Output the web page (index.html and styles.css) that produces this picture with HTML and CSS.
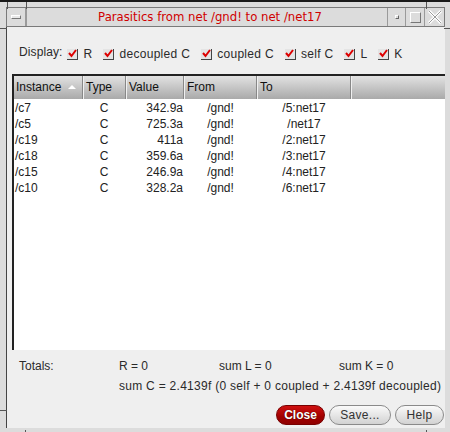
FILE: index.html
```html
<!DOCTYPE html>
<html>
<head>
<meta charset="utf-8">
<link rel="stylesheet" href="styles.css">
</head>
<body>
<div class="frame">
  <div class="titlebar">
    <div class="tb-btn menu-btn"><span class="bar"></span></div>
    <div class="title">Parasitics from net /gnd! to net /net17</div>
    <div class="tb-btn"><span class="dot"></span></div>
    <div class="tb-btn"><span class="sq"></span></div>
    <div class="tb-btn close-x">
      <svg width="14" height="14" viewBox="0 0 14 14"><path d="M1 1 L13 13 M13 1 L1 13" stroke="#fff" stroke-width="3"/><path d="M1 1 L13 13 M13 1 L1 13" stroke="#9a9a9a" stroke-width="1"/></svg>
    </div>
  </div>
  <div class="content">
    <div class="display">
      <span class="dlabel">Display:</span>
      <label class="cb"><span class="box"><svg width="9" height="9" viewBox="0 0 9 9"><path d="M1 4 L3.5 7 L8 1" fill="none" stroke="#d00" stroke-width="2"/></svg></span>R</label>
      <label class="cb"><span class="box"><svg width="9" height="9" viewBox="0 0 9 9"><path d="M1 4 L3.5 7 L8 1" fill="none" stroke="#d00" stroke-width="2"/></svg></span>decoupled C</label>
      <label class="cb"><span class="box"><svg width="9" height="9" viewBox="0 0 9 9"><path d="M1 4 L3.5 7 L8 1" fill="none" stroke="#d00" stroke-width="2"/></svg></span>coupled C</label>
      <label class="cb"><span class="box"><svg width="9" height="9" viewBox="0 0 9 9"><path d="M1 4 L3.5 7 L8 1" fill="none" stroke="#d00" stroke-width="2"/></svg></span>self C</label>
      <label class="cb"><span class="box"><svg width="9" height="9" viewBox="0 0 9 9"><path d="M1 4 L3.5 7 L8 1" fill="none" stroke="#d00" stroke-width="2"/></svg></span>L</label>
      <label class="cb"><span class="box"><svg width="9" height="9" viewBox="0 0 9 9"><path d="M1 4 L3.5 7 L8 1" fill="none" stroke="#d00" stroke-width="2"/></svg></span>K</label>
    </div>
    <div class="table">
      <div class="thead">
        <div class="th c1">Instance <span class="arrow"></span></div>
        <div class="th c2">Type</div>
        <div class="th c3">Value</div>
        <div class="th c4">From</div>
        <div class="th c5">To</div>
        <div class="th c6"></div>
      </div>
      <div class="tbody">
        <div class="tr"><span class="c1">/c7</span><span class="c2">C</span><span class="c3">342.9a</span><span class="c4">/gnd!</span><span class="c5">/5:net17</span></div>
        <div class="tr"><span class="c1">/c5</span><span class="c2">C</span><span class="c3">725.3a</span><span class="c4">/gnd!</span><span class="c5">/net17</span></div>
        <div class="tr"><span class="c1">/c19</span><span class="c2">C</span><span class="c3">411a</span><span class="c4">/gnd!</span><span class="c5">/2:net17</span></div>
        <div class="tr"><span class="c1">/c18</span><span class="c2">C</span><span class="c3">359.6a</span><span class="c4">/gnd!</span><span class="c5">/3:net17</span></div>
        <div class="tr"><span class="c1">/c15</span><span class="c2">C</span><span class="c3">246.9a</span><span class="c4">/gnd!</span><span class="c5">/4:net17</span></div>
        <div class="tr"><span class="c1">/c10</span><span class="c2">C</span><span class="c3">328.2a</span><span class="c4">/gnd!</span><span class="c5">/6:net17</span></div>
      </div>
    </div>
    <div class="totals">
      <div class="trow">
        <span class="tl">Totals:</span><span class="tr1">R = 0</span><span class="tr2">sum L = 0</span><span class="tr3">sum K = 0</span>
      </div>
      <div class="trow2">sum C = 2.4139f (0 self + 0 coupled + 2.4139f decoupled)</div>
    </div>
    <div class="buttons">
      <button class="btn close">Close</button>
      <button class="btn save">Save...</button>
      <button class="btn help">Help</button>
    </div>
  </div>
  <span class="tick t1"></span><span class="tick t2"></span><span class="tick t3"></span><span class="tick t4"></span>
  <span class="tick t5"></span><span class="tick t6"></span><span class="tick t7"></span><span class="tick t8"></span>
</div>
</body>
</html>
```
FILE: styles.css
```css
* { box-sizing: border-box; }
html, body { margin: 0; padding: 0; }
body { width: 450px; height: 432px; overflow: hidden; font-family: "Liberation Sans", Arial, sans-serif; font-size: 12px; color: #2a2a2a; }
.frame {
  position: relative;
  width: 450px; height: 432px;
  background: #dcdcdc;
  border-top: 2px solid #1a1a1a;
  padding: 5px 5px 0 6px;
  display: flex; flex-direction: column;
}
.tick { position: absolute; background: #555; }
.t1 { left: 7px; top: 0; width: 1px; height: 7px; }
.t2 { left: 26px; top: 0; width: 1px; height: 7px; }
.t3 { left: 426px; top: 0; width: 1px; height: 7px; }
.t4 { left: 0; top: 26px; width: 7px; height: 1px; }
.t5 { left: 0; top: 408px; width: 7px; height: 1px; }
.t6 { left: 25px; top: 428px; width: 1px; height: 4px; }
.t7 { left: 426px; top: 428px; width: 1px; height: 4px; }
.t8 { left: 444px; top: 26px; width: 6px; height: 1px; }
.titlebar {
  height: 20px;
  display: flex;
  border: 1px solid #7a7a7a;
  background: #dcdcdc;
}
.tb-btn {
  width: 19px; height: 18px;
  border-right: 1px solid #9a9a9a;
  display: flex; align-items: center; justify-content: center;
}
.tb-btn:last-child { border-right: none; }
.title + .tb-btn { border-left: 1px solid #9a9a9a; }
.menu-btn .bar { width: 10px; height: 4px; border: 1px solid #777; border-top-color: #fff; border-left-color: #fff; background: #e8e8e8; }
.tb-btn .dot { width: 4px; height: 4px; border: 1px solid #666; border-top-color: #fff; border-left-color: #fff; }
.tb-btn .sq { width: 11px; height: 11px; border: 1px solid #777; border-top-color: #fff; border-left-color: #fff; }
.title {
  flex: 1;
  text-align: center;
  color: #d00000;
  font-family: "DejaVu Sans", sans-serif;
  font-size: 11.7px;
  line-height: 18px;
  border-left: 1px solid #9a9a9a;
  padding-left: 6px;
}
.content {
  flex: 1;
  background: #efefef;
  border-left: 1px solid #444;
  margin-bottom: 4px;
  padding: 0 0 0 5px;
  display: flex; flex-direction: column;
}
.display {
  display: flex; align-items: center;
  height: 18px; margin-top: 18px;
  padding-left: 7px;
}
.dlabel { margin-right: 5px; position: relative; top: -2px; letter-spacing: 0.1px; }
.cb { display: flex; align-items: center; margin-right: 11px; letter-spacing: 0.3px; }
.box {
  width: 11px; height: 11px; margin-right: 5px;
  background: #e4e4e4;
  border-right: 1px solid #444; border-bottom: 1px solid #444;
  display: flex; align-items: flex-start; justify-content: center;
}
.table {
  margin-top: 11px;
  height: 276px;
  background: #fff;
  border-top: 2px solid #222;
  border-left: 2px solid #222;
  margin-right: 0;
  display: flex; flex-direction: column;
}
.thead {
  height: 23px;
  display: flex;
  background: linear-gradient(#e2e2e2, #a9a9a9);
}
.th {
  line-height: 22px;
  padding-left: 2px;
  border-right: 1px solid #888;
  border-left: 1px solid #f0f0f0;
  color: #111;
  white-space: nowrap;
}
.th.c1 { border-left: none; }
.c1 { width: 69px; }
.c2 { width: 43px; }
.c3 { width: 58px; }
.c4 { width: 73px; }
.c5 { width: 94px; }
.th.c6 { flex: 1; border-right: none; }
.arrow { display: inline-block; width: 0; height: 0; border-left: 4px solid transparent; border-right: 4px solid transparent; border-bottom: 4px solid #fff; margin-left: 3px; vertical-align: 2px; }
.tbody { padding-top: 1px; }
.tr { display: flex; height: 16px; line-height: 16px; color: #222; }
.tr span { white-space: nowrap; }
.tr .c1 { padding-left: 1px; }
.tr .c2 { text-align: center; padding-right: 1px; }
.tr .c3 { text-align: right; padding-right: 1px; }
.tr .c4 { text-align: center; }
.tr .c5 { text-align: center; }
.totals { padding-left: 7px; margin-top: 8px; }
.trow { display: flex; height: 17px; line-height: 17px; }
.tl { width: 100px; }
.tr1 { width: 100px; }
.tr2 { width: 120px; }
.trow2 { padding-left: 100px; line-height: 17px; margin-top: 3px; white-space: nowrap; letter-spacing: 0.28px; }
.buttons {
  margin-top: auto; margin-bottom: 3px;
  display: flex; justify-content: flex-end; gap: 4px;
  padding-right: 1px;
}
.btn {
  height: 20px;
  border-radius: 10px;
  font-family: "Liberation Sans", Arial, sans-serif;
  font-size: 12px;
  border: 1px solid #8a8a8a;
  background: linear-gradient(#fafafa, #d2d2d2);
  color: #333;
  padding: 0;
  letter-spacing: 0.3px;
}
.close { width: 49px; background: linear-gradient(#d01010, #a00000 60%, #900000); border-color: #700; color: #fff; font-weight: bold; text-shadow: 0 0 1px #300; letter-spacing: 0; }
.save { width: 62px; }
.help { width: 49px; }
```
